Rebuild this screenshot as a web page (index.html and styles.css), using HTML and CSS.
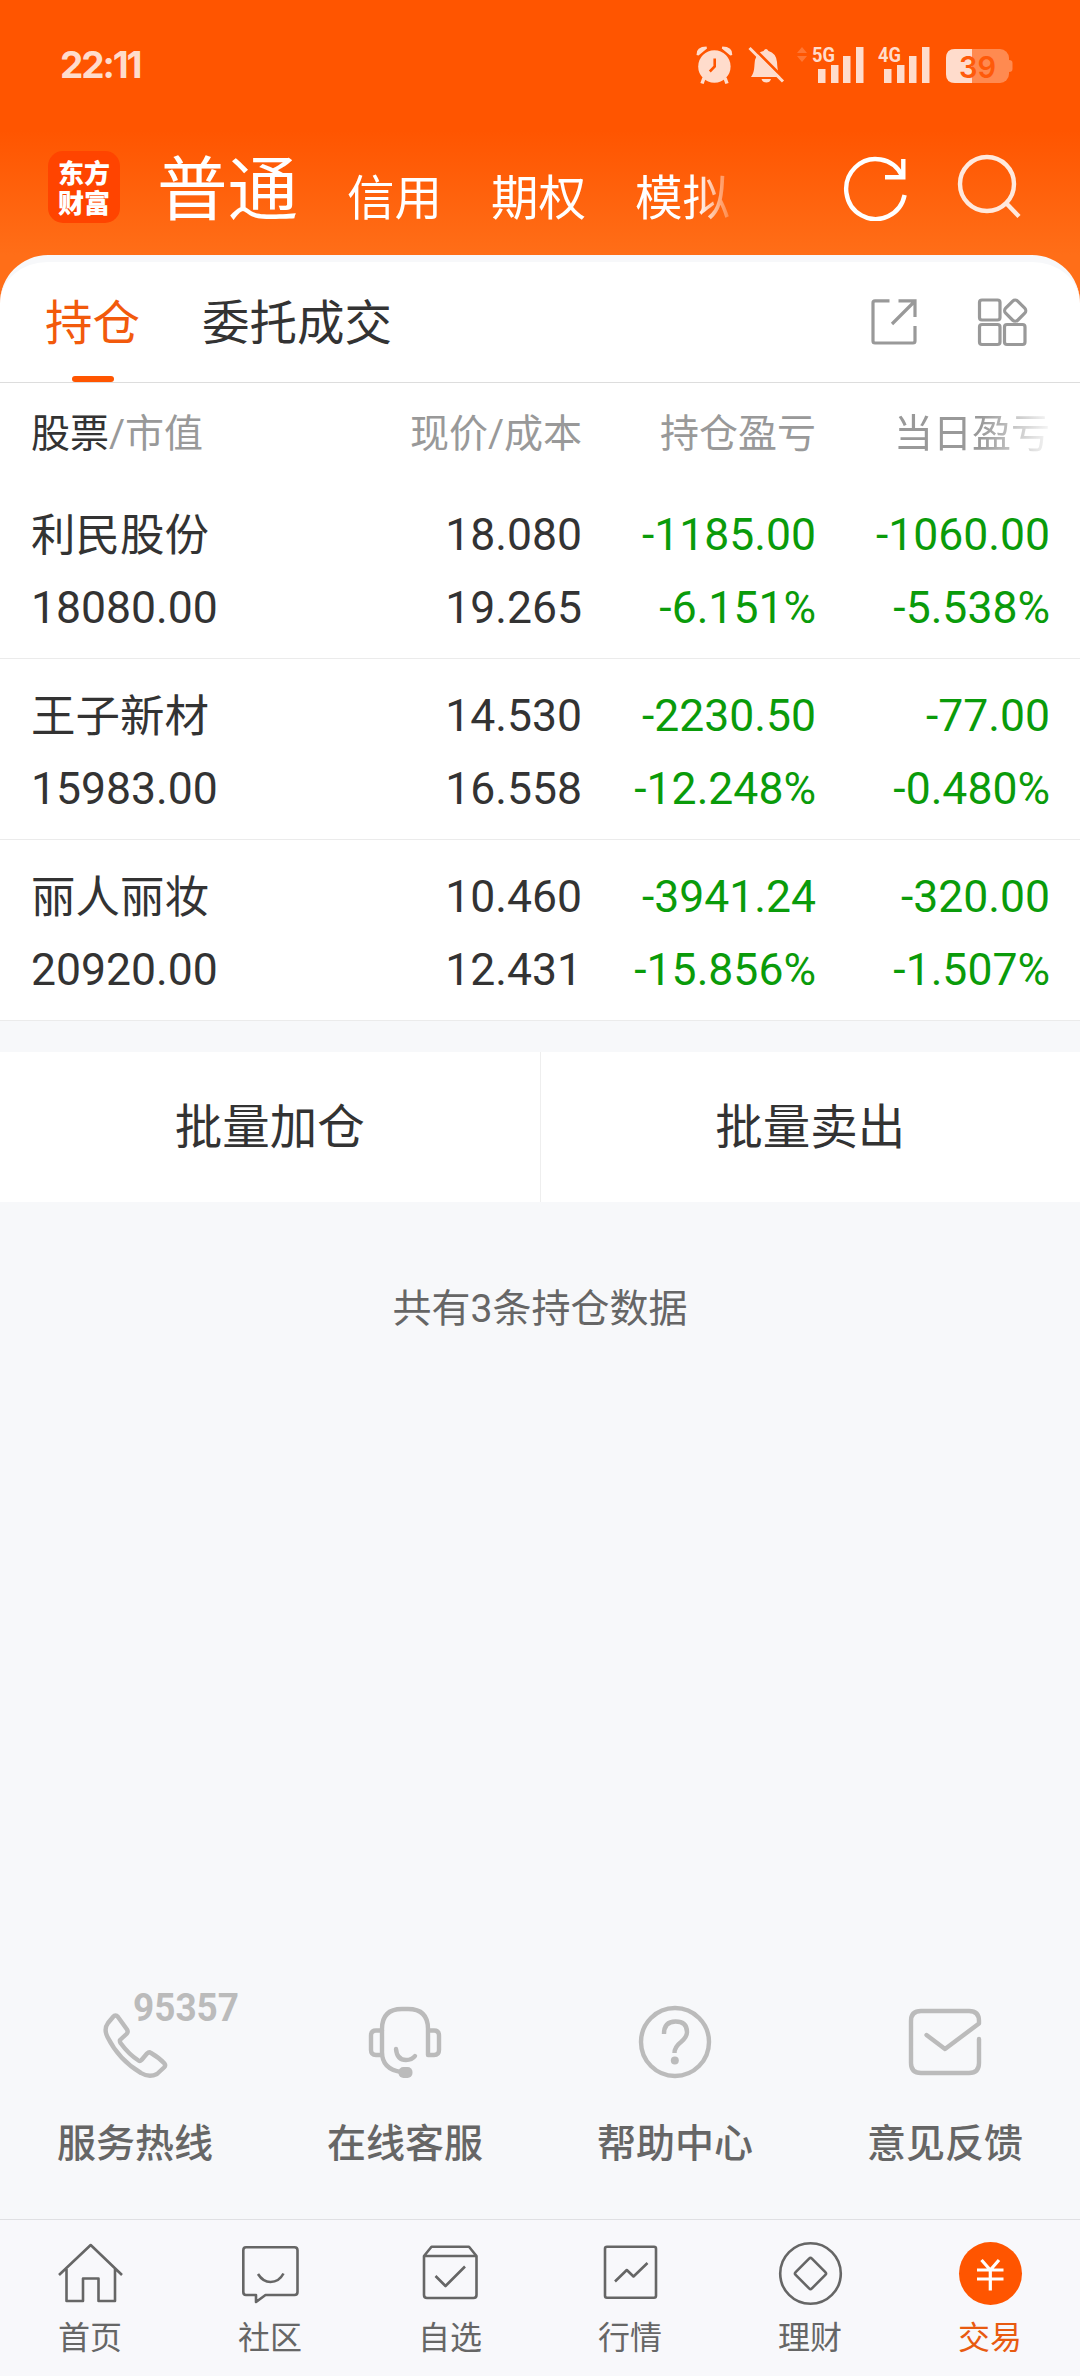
FILE: index.html
```html
<!DOCTYPE html>
<html lang="zh-CN">
<head>
<meta charset="utf-8">
<title>持仓</title>
<link rel="stylesheet" href="styles.css">
</head>
<body>
<header class="top">
  <div class="status">
    <span class="clock">22:11</span>
    <svg class="status-icons" width="320" height="42" viewBox="694 44 320 42">
      <g fill="#ffdccc" stroke="none">
        <circle cx="714.4" cy="66.5" r="16.2"/>
        <path d="M696.5 55 Q696 46.5 706.5 46.5 L707 48.5 L698.500 55.500Z M732.300 55 Q732.800 46.500 722.300 46.500 L721.800 48.500 L730.300 55.500Z"/>
        <path d="M704 78 L702 83.500 M725 78 L727 83.500" stroke="#ffdccc" stroke-width="3.500"/>
        <path d="M714.700 58.500 V66.500 L709.800 71.500" fill="none" stroke="#ff5500" stroke-width="2.600"/>
        <path d="M751 77 C755 72 754 66 755 60 Q757 52 763.500 51 Q766 47 768.500 51 Q776 53 777 62 C777.500 70 778 73 781.500 77Z M761.500 79 H771 Q770 82.500 766.300 82.500 Q762.500 82.500 761.500 79Z"/>
        <path d="M751.500 46 L785 79.500" stroke="#ff5500" stroke-width="3"/>
        <path d="M749.500 48 L783 81.500" stroke="#ffdccc" stroke-width="3"/>
        <path d="M797 53 L802 47 L807 53Z M797 56 L802 62 L807 56Z" opacity=".25"/>
        <path d="M818 69h7.500v14h-7.500z M831 65h7.500v18h-7.500z M843 56h7.500v27h-7.500z M856 47h7.500v36h-7.500z"/>
        <path d="M884 69h7.500v14h-7.500z M897 65h7.500v18h-7.500z M909 56h7.500v27h-7.500z M922 47h7.500v36h-7.500z"/>
        <text class="net" x="812" y="62" textLength="23" lengthAdjust="spacingAndGlyphs">5G</text>
        <text class="net" x="878" y="62" textLength="23" lengthAdjust="spacingAndGlyphs">4G</text>
        <rect x="946" y="49" width="63" height="34" rx="9" fill="#ff8a50"/>
        <path d="M1009 60 q3.500 0 3.500 3 v6 q0 3 -3.500 3z" fill="#ff8a50"/>
        <path d="M972 49 H955 Q946 49 946 58 V74 Q946 83 955 83 H972Z"/>
        <text class="level" x="959" y="77.500" textLength="37" lengthAdjust="spacingAndGlyphs">39</text>
      </g>
    </svg>
  </div>
  <div class="accounts">
    <div class="logo">东方财富</div>
    <nav class="account-tabs">
      <span class="current">普通</span>
      <span>信用</span>
      <span>期权</span>
      <span>模拟</span>
    </nav>
    <svg class="refresh" width="66" height="66" viewBox="843 155 66 66" fill="none" stroke="#fff" stroke-width="4.400">
      <path d="M904.600 195 A29.500 30 0 1 1 902 175.500"/>
      <path d="M903.300 159 V177.300 H885"/>
    </svg>
    <svg class="search" width="66" height="66" viewBox="957 154 66 66" fill="none" stroke="#ffe9dd" stroke-width="4.400">
      <circle cx="987" cy="184" r="27"/><path d="M1006 203 L1019 216.500"/>
    </svg>
  </div>
</header>

<main class="sheet">
  <div class="tabs">
    <span class="tab active">持仓</span>
    <span class="tab">委托成交</span>
    <svg class="share" width="48" height="50" viewBox="870 297 48 50" fill="none" stroke="#999" stroke-width="3.200">
      <path d="M889.500 300.800 H875 Q873 300.800 873 302.800 V341 Q873 343 875 343 H913 Q915 343 915 341 V326"/>
      <path d="M898.500 300.800 H915 V317 M914.500 301.500 L892 324"/>
    </svg>
    <svg class="grid" width="52" height="52" viewBox="976 297 52 52" fill="none" stroke="#999" stroke-width="3.200">
      <rect x="979.500" y="301" width="20.500" height="20" rx="2.500"/>
      <rect x="979.500" y="325.500" width="20.500" height="20" rx="2.500"/>
      <rect x="1004.500" y="325.500" width="20.500" height="20" rx="2.500"/>
      <rect x="1006.700" y="303.200" width="17" height="17" rx="3.500" transform="rotate(45 1015.200 311.700)"/>
    </svg>
  </div>

  <div class="row head">
    <span><b>股票</b>/市值</span><span>现价/成本</span><span>持仓盈亏</span><span class="fade">当日盈亏</span>
  </div>
  <div class="row">
    <span class="name">利民股份</span><span>18.080</span><span class="down">-1185.00</span><span class="down">-1060.00</span>
    <span>18080.00</span><span>19.265</span><span class="down">-6.151%</span><span class="down">-5.538%</span>
  </div>
  <div class="row">
    <span class="name">王子新材</span><span>14.530</span><span class="down">-2230.50</span><span class="down">-77.00</span>
    <span>15983.00</span><span>16.558</span><span class="down">-12.248%</span><span class="down">-0.480%</span>
  </div>
  <div class="row">
    <span class="name">丽人丽妆</span><span>10.460</span><span class="down">-3941.24</span><span class="down">-320.00</span>
    <span>20920.00</span><span>12.431</span><span class="down">-15.856%</span><span class="down">-1.507%</span>
  </div>
</main>

<div class="batch"><span>批量加仓</span><span>批量卖出</span></div>
<p class="summary">共有3条持仓数据</p>

<section class="services">
  <div class="service">
    <svg width="140" height="100" viewBox="65 1991 140 100" fill="none" stroke="#bbb" stroke-width="4.400" stroke-linejoin="round">
      <path d="M113 2017 Q115.500 2014 118 2017 L127 2029.500 Q128.500 2032 126.500 2034 L120 2040 Q119.500 2041 120.500 2043 Q129 2054.500 138.500 2060.500 Q140 2061.500 141.500 2060 L147 2053.500 Q149 2051.500 151 2053 Q159.500 2058 164.500 2063.500 Q166 2065.500 164 2067.500 L157 2074 Q149 2078 141 2073 Q119 2060 107.500 2037 Q103.500 2029 108 2023Z"/>
      <text class="hotline" x="133" y="2021" textLength="106" lengthAdjust="spacingAndGlyphs">95357</text>
    </svg>
    <span>服务热线</span>
  </div>
  <div class="service">
    <svg width="140" height="100" viewBox="335 1991 140 100" fill="none" stroke="#bbb" stroke-width="4.400" stroke-linecap="round" stroke-linejoin="round">
      <path d="M382 2030.500 H376 Q371 2030.500 371 2035.500 V2050 Q371 2055 376 2055 H382"/>
      <path d="M401 2072 Q382 2069 382 2052 V2029 Q382 2009 402 2009 H408 Q428 2009 428 2029 V2055 H434 Q439 2055 439 2050 V2035.500 Q439 2030.500 434 2030.500 H428"/>
      <path d="M396 2049 Q397 2060 406 2060 Q412 2060 415 2056"/>
      <rect x="398.500" y="2067" width="14" height="11" rx="5" fill="#bbb" stroke="none"/>
    </svg>
    <span>在线客服</span>
  </div>
  <div class="service">
    <svg width="140" height="100" viewBox="605 1991 140 100" fill="none" stroke="#bbb" stroke-width="4.400">
      <circle cx="675" cy="2042" r="34"/>
      <path d="M664 2034 Q664 2021.500 675.500 2021.500 Q687 2021.500 687 2032 Q687 2037 681 2042 Q674.500 2047 674.500 2053"/>
      <circle cx="674.800" cy="2060.500" r="4" fill="#bbb" stroke="none"/>
    </svg>
    <span>帮助中心</span>
  </div>
  <div class="service">
    <svg width="140" height="100" viewBox="875 1991 140 100" fill="none" stroke="#bbb" stroke-width="4.400" stroke-linecap="round" stroke-linejoin="round">
      <path d="M926.500 2035 L945 2049 L979 2023.500 V2021 Q979 2011 969 2011 H921 Q911 2011 911 2021 V2063 Q911 2073 921 2073 H969 Q979 2073 979 2063 V2039"/>
    </svg>
    <span>意见反馈</span>
  </div>
</section>

<nav class="bottom">
  <div class="item">
    <svg width="80" height="70" viewBox="49 2238 80 70">
      <path d="M58 2275 L89.700 2245 L121 2275 M65.500 2269 V2301 H82 V2278.500 H97.500 V2301 H114 V2269"/>
    </svg>
    <span>首页</span>
  </div>
  <div class="item">
    <svg width="80" height="70" viewBox="229 2238 80 70">
      <path d="M245 2247.300 H293.500 Q296.500 2247.300 296.500 2250.300 V2292 Q296.500 2295 293.500 2295 H264.500 L255 2302 V2295 H245 Q242.300 2295 242.300 2292 V2250.300 Q242.300 2247.300 245 2247.300Z M257 2274 Q262 2282 269.500 2282 Q278 2282 282.500 2273.500"/>
    </svg>
    <span>社区</span>
  </div>
  <div class="item">
    <svg width="80" height="70" viewBox="409 2238 80 70">
      <path d="M423 2256 L430.500 2246.800 H468 L475.500 2256 V2295 Q475.500 2298 472.500 2298 H426 Q423 2298 423 2295Z M423 2256 H475.500 M434.500 2276 L444.500 2286 L464 2266.500"/>
    </svg>
    <span>自选</span>
  </div>
  <div class="item">
    <svg width="80" height="70" viewBox="589 2238 80 70">
      <rect x="604" y="2246.800" width="51" height="51" rx="2"/>
      <path d="M614 2281.500 L625.800 2270 L632.500 2276.500 L646.500 2263"/>
    </svg>
    <span>行情</span>
  </div>
  <div class="item">
    <svg width="80" height="70" viewBox="769 2238 80 70">
      <circle cx="809.500" cy="2273.500" r="30.300"/>
      <rect x="798" y="2262" width="23" height="23" rx="2" transform="rotate(45 809.500 2273.500)"/>
    </svg>
    <span>理财</span>
  </div>
  <div class="item on">
    <svg width="80" height="70" viewBox="949 2238 80 70">
      <circle cx="989.500" cy="2273.500" r="31.500" class="disc"/>
      <path class="yen" d="M980.500 2260 L989.300 2270 L998 2260 M976 2270 H1002.500 M976 2279 H1002.500 M989.300 2270 V2290.500"/>
    </svg>
    <span>交易</span>
  </div>
</nav>
</body>
</html>
```
FILE: styles.css
```css
* { box-sizing: border-box; }
body {
  margin: 0;
  width: 1080px;
  height: 2376px;
  overflow: hidden;
  display: flex;
  flex-direction: column;
  background: #f7f8fa;
  color: #333;
  font-family: Roboto, "Noto Sans CJK SC", sans-serif;
}
svg { display: block; flex: none; }

.top {
  height: 320px;
  flex: none;
  background: linear-gradient(#ff5500 130px, #ff6e18 255px);
}
.status {
  height: 130px;
  padding: 0 66px 0 60px;
  display: flex;
  align-items: center;
  justify-content: space-between;
}
.clock {
  font: 700 37px/40px Inter, sans-serif;
  letter-spacing: -2.1px;
  color: #ffdccc;
}
.net { font: 700 21px Roboto, sans-serif; }
.level { font: 600 30px Inter, sans-serif; fill: #ff5a0a; }
.accounts {
  height: 125px;
  padding-left: 48px;
  display: flex;
  align-items: flex-start;
}
.logo {
  width: 72px;
  height: 72px;
  margin-top: 21px;
  padding: 6px 10px 0;
  border-radius: 15px;
  background: #ff4400;
  color: #fff;
  font: 900 26px/30px "Noto Sans CJK SC", sans-serif;
}
.account-tabs {
  width: 580px;
  height: 108px;
  padding-top: 11px;
  margin-left: 37px;
  display: flex;
  align-items: baseline;
  gap: 49px;
  color: #fff;
  font-size: 47.500px;
  line-height: 100px;
  white-space: nowrap;
  -webkit-mask-image: linear-gradient(90deg, #000 540px, transparent 582px);
  mask-image: linear-gradient(90deg, #000 540px, transparent 582px);
}
.account-tabs .current { font-size: 70.500px; }
.refresh { margin: 25px 0 0 106px; }
.search { margin: 24px 0 0 48px; }

.sheet {
  margin-top: -65px;
  flex: none;
  border-top: 7px solid #f7f8fa;
  border-radius: 48px 48px 0 0;
  background: #fff;
}
.tabs {
  height: 121px;
  padding: 0 52px 0 45px;
  display: flex;
  align-items: center;
  border-bottom: 1px solid #ddd;
  font-size: 47.500px;
}
.tab {
  height: 120px;
  line-height: 124px;
  margin-right: 62px;
}
.tab.active { color: #f25a0c; }
.tab.active::after {
  content: "";
  display: block;
  width: 42px;
  height: 6px;
  margin: -10px auto 0;
  border-radius: 3px;
  background: #ff5500;
}
.share { margin-left: auto; }
.grid { margin-left: 58px; }

.row {
  height: 181px;
  padding: 20px 30px 14px 31px;
  display: grid;
  grid-template-columns: 1fr 250px 234px 234px;
  grid-auto-rows: 73px;
  align-items: center;
  border-bottom: 1px solid #ebebeb;
  font-size: 44.500px;
  text-align: right;
}
.row > :nth-child(4n + 1) { text-align: left; }
.row .name { padding-bottom: 6px; }
.row.head {
  height: 95px;
  padding: 10px 30px 0 31px;
  border: 0;
  color: #999;
  font-size: 39px;
}
.head b { font-weight: 400; color: #333; }
.down { color: #0a9b0a; }
.fade {
  -webkit-mask-image: linear-gradient(90deg, #000 165px, transparent 240px);
  mask-image: linear-gradient(90deg, #000 165px, transparent 240px);
}

.batch {
  height: 150px;
  flex: none;
  margin-top: 31px;
  display: flex;
  background: #fff;
  font-size: 47.500px;
  line-height: 153px;
  text-align: center;
}
.batch span { flex: 1; }
.batch span + span { border-left: 1px solid #eee; }
.summary {
  margin: 78px 0 0;
  font-size: 39px;
  line-height: 58px;
  text-align: center;
  color: #666;
}

.services {
  margin-top: auto;
  height: 228px;
  flex: none;
  display: flex;
}
.service {
  flex: 1;
  display: flex;
  flex-direction: column;
  align-items: center;
  gap: 24px;
  color: #666;
  font-size: 39px;
  font-weight: 500;
  line-height: 58px;
}
.service svg { overflow: visible; }
.hotline { font: 700 38px Roboto, sans-serif; fill: #bbb; stroke: none; }

.bottom {
  height: 157px;
  flex: none;
  padding-top: 18px;
  display: flex;
  border-top: 1px solid #e0e0e3;
  background: #f8f8fb;
}
.item {
  flex: 1;
  display: flex;
  flex-direction: column;
  align-items: center;
  gap: 6px;
  color: #666;
  font-size: 32px;
  line-height: 48px;
}
.item svg {
  fill: none;
  stroke: #666;
  stroke-width: 2.600;
  stroke-linejoin: round;
}
.item.on { color: #e85a10; }
.item .disc { fill: #ff5500; stroke: none; }
.item .yen { stroke: #fff; stroke-width: 3.200; }
```
